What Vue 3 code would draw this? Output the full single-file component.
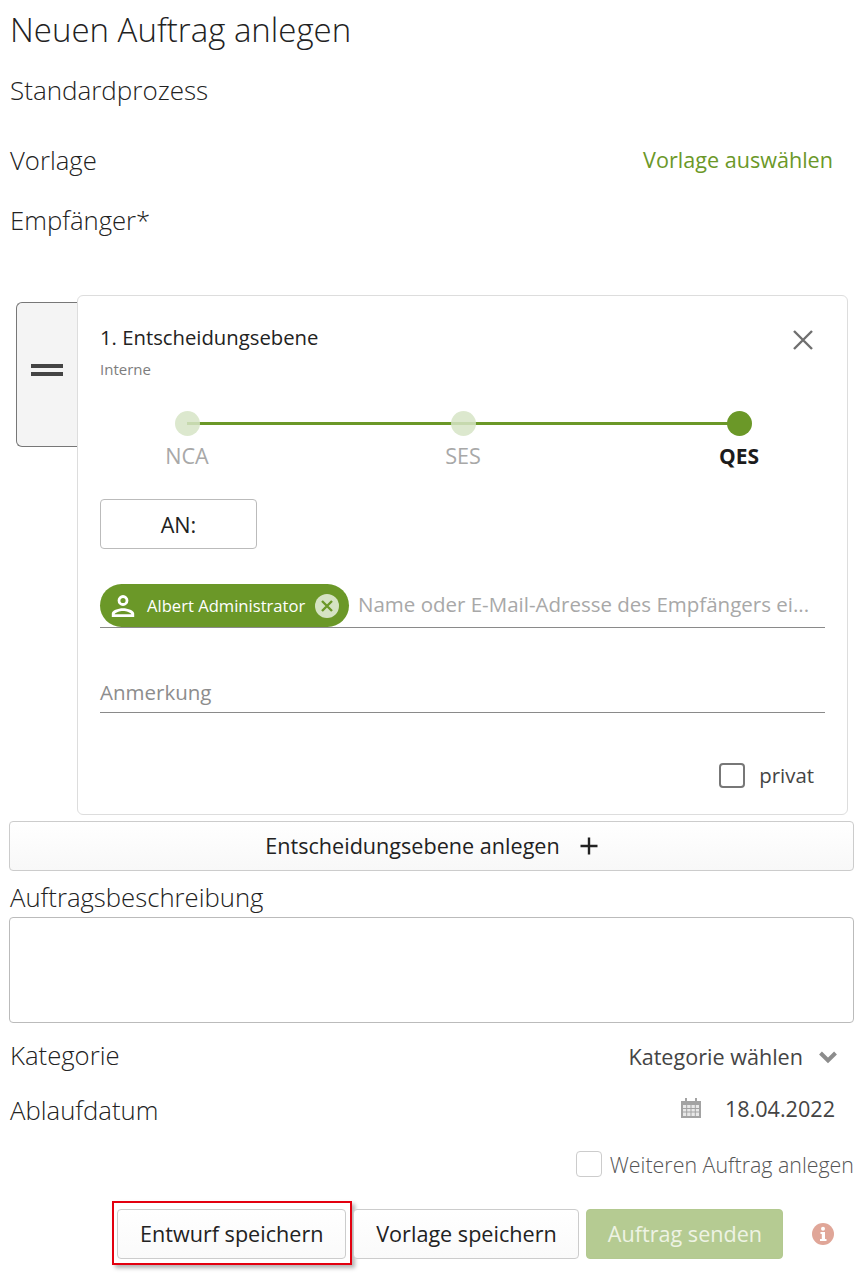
<template>
  <div class="page">
    <h1 class="title">Neuen Auftrag anlegen</h1>
    <div class="row process">Standardprozess</div>
    <div class="row template-row">
      <span>Vorlage</span>
      <a class="template-link">Vorlage auswählen</a>
    </div>
    <div class="row recipient-label">Empfänger*</div>

    <div class="level-wrap">
      <div class="handle">
        <span class="handle-bar"></span>
        <span class="handle-bar"></span>
      </div>
      <section class="level-card">
        <div class="level-head">
          <div class="level-title">1. Entscheidungsebene</div>
          <svg class="close" width="20" height="20" viewBox="0 0 20 20">
            <path d="M1 1 L19 19 M19 1 L1 19" stroke="#6f6f6f" stroke-width="2.4" fill="none" />
          </svg>
        </div>
        <div class="level-sub">Interne</div>

        <div class="stepper">
          <div class="step-line"></div>
          <div v-for="step in steps" :key="step.name" class="step" :class="{ active: step.active }">
            <span class="step-dot"></span>
            <span class="step-name">{{ step.name }}</span>
          </div>
        </div>

        <button class="to-btn">AN:</button>

        <div class="recipient-input">
          <div class="chip">
            <svg class="chip-user" width="24" height="24" viewBox="0 0 24 24">
              <circle cx="12" cy="6.5" r="4" fill="none" stroke="#fff" stroke-width="2.8" />
              <path d="M0.8 23 V19.5 C0.8 16.5 7 14.2 12 14.2 C17 14.2 23.2 16.5 23.2 19.5 V23 Z M3.6 20.2 H20.4 C19.4 18.4 15.5 17 12 17 C8.5 17 4.6 18.4 3.6 20.2 Z" fill="#fff" fill-rule="evenodd" />
            </svg>
            <span class="chip-name">Albert Administrator</span>
            <span class="chip-remove">
              <svg width="14" height="14" viewBox="0 0 14 14">
                <path d="M2 2 L12 12 M12 2 L2 12" stroke="#6b9828" stroke-width="2.4" fill="none" />
              </svg>
            </span>
          </div>
          <span class="placeholder recipient-placeholder">Name oder E-Mail-Adresse des Empfängers ei...</span>
        </div>

        <div class="note-input">
          <span class="placeholder">Anmerkung</span>
        </div>

        <label class="private">
          <span class="private-box"></span>
          <span>privat</span>
        </label>
      </section>
    </div>

    <button class="add-level">
      <span>Entscheidungsebene anlegen</span>
      <svg width="18" height="18" viewBox="0 0 18 18">
        <path d="M9 0.5 V17.5 M0.5 9 H17.5" stroke="#222" stroke-width="2.4" fill="none" />
      </svg>
    </button>

    <div class="row desc-label">Auftragsbeschreibung</div>
    <div class="desc-box"></div>

    <div class="row category-row">
      <span class="field-name">Kategorie</span>
      <span class="category-value">
        Kategorie wählen
        <svg class="chevron" width="20" height="14" viewBox="0 0 20 14">
          <path d="M2.5 3 L10 10.5 L17.5 3" stroke="#8c8c8c" stroke-width="4" fill="none" />
        </svg>
      </span>
    </div>

    <div class="row date-row">
      <span class="field-name">Ablaufdatum</span>
      <span class="date-value">
        <svg width="22" height="22" viewBox="0 0 22 22">
          <path d="M1 4 H21 V21 H1 Z" fill="#a3a3a3" />
          <path d="M5 1 H7 V6 H5 Z M15 1 H17 V6 H15 Z" fill="#a3a3a3" />
          <path d="M3 8 H19 V19 H3 Z" fill="#e8e8e8" />
          <path d="M3 11.5 H19 M3 15 H19 M6.7 8 V19 M11 8 V19 M15.3 8 V19" stroke="#a3a3a3" stroke-width="1" fill="none" />
        </svg>
        18.04.2022
      </span>
    </div>

    <label class="another">
      <span class="another-box"></span>
      <span>Weiteren Auftrag anlegen</span>
    </label>

    <div class="actions">
      <div class="highlight">
        <button class="btn">Entwurf speichern</button>
      </div>
      <button class="btn template-btn">Vorlage speichern</button>
      <button class="btn send">Auftrag senden</button>
      <svg class="info" width="22" height="22" viewBox="0 0 22 22">
        <circle cx="11" cy="11" r="11" fill="#e0a698" />
        <circle cx="11" cy="5.8" r="2" fill="#fff" />
        <path d="M8.5 9 H13 V16 H14.5 V18 H8 V16 H9.8 V11 H8.5 Z" fill="#fff" />
      </svg>
    </div>
  </div>
</template>

<script setup>
const steps = [
  { name: 'NCA', active: false },
  { name: 'SES', active: false },
  { name: 'QES', active: true }
];
</script>

<style scoped>
.page {
  box-sizing: border-box;
  width: 867px;
  height: 1276px;
  padding: 0 13px 0 9px;
  overflow: hidden;
  font-family: "Open Sans", sans-serif;
  color: #2b2b2b;
  background: #fff;
}

.title {
  height: 62px;
  margin: 0;
  padding-left: 1px;
  font-size: 33px;
  font-weight: 300;
  line-height: 60px;
  color: #222;
}

.row {
  display: flex;
  align-items: center;
  justify-content: space-between;
  box-sizing: border-box;
  padding-left: 1px;
  font-size: 25.7px;
  font-weight: 300;
  color: #222;
}

.process {
  height: 58px;
  padding-bottom: 2px;
  font-size: 26px;
}

.template-row {
  height: 60px;
  margin-top: 10px;
}

.template-link {
  padding: 0 21px 2px 0;
  font-size: 21.6px;
  font-weight: 400;
  color: #6b9828;
}

.recipient-label {
  height: 58px;
  padding-top: 2px;
}

.level-wrap {
  display: flex;
  align-items: flex-start;
  margin-top: 47px;
  padding-left: 7px;
}

.handle {
  box-sizing: border-box;
  display: flex;
  flex-direction: column;
  align-items: center;
  justify-content: center;
  gap: 4px;
  width: 61px;
  height: 145px;
  margin-top: 7px;
  padding-bottom: 9px;
  border: 1px solid #777;
  border-right: 0;
  border-radius: 6px 0 0 6px;
  background: #f4f4f4;
}

.handle-bar {
  width: 32px;
  height: 4px;
  background: #444;
}

.level-card {
  box-sizing: border-box;
  width: 771px;
  height: 520px;
  padding: 0 22px;
  border: 1px solid #ddd;
  border-radius: 6px;
  background: #fff;
}

.level-head {
  display: flex;
  align-items: center;
  justify-content: space-between;
  height: 42px;
  margin-top: 21px;
  padding-right: 12px;
}

.close {
  margin-top: 4px;
}

.level-title {
  padding-bottom: 2px;
  font-size: 20.3px;
  color: #222;
}

.level-sub {
  font-size: 15px;
  line-height: 20px;
  color: #7d7d7d;
}

.stepper {
  position: relative;
  display: flex;
  justify-content: space-between;
  margin-top: 32px;
  padding: 0 56px 0 57px;
}

.step-line {
  position: absolute;
  top: 11px;
  left: 87px;
  right: 86px;
  height: 3px;
  background: #6b9828;
}

.step {
  position: relative;
  display: flex;
  flex-direction: column;
  align-items: center;
  width: 60px;
}

.step-dot {
  width: 25px;
  height: 25px;
  border-radius: 50%;
  background: rgba(214, 228, 197, 0.85);
}

.step-name {
  margin-top: 6px;
  font-size: 21.6px;
  line-height: 28px;
  color: #a8a8a8;
}

.step.active .step-dot {
  background: #6b9828;
}

.step.active .step-name {
  font-size: 21px;
  font-weight: 700;
  color: #1c1c1c;
}

.to-btn {
  display: block;
  width: 157px;
  height: 50px;
  margin-top: 29px;
  padding: 0;
  border: 1px solid #bbb;
  border-radius: 4px;
  background: #fff;
  font: 400 21.6px "Open Sans", sans-serif;
  color: #222;
}

.recipient-input {
  display: flex;
  align-items: center;
  gap: 9px;
  height: 43px;
  margin-top: 35px;
  border-bottom: 1px solid #8a8a8a;
}

.chip {
  display: flex;
  flex: none;
  align-items: center;
  box-sizing: border-box;
  width: 249px;
  height: 43px;
  padding: 0 10px 0 11px;
  border-radius: 22px;
  background: #6b9828;
  color: #fff;
}

.chip-name {
  margin-left: 12px;
  font-size: 16.6px;
  white-space: nowrap;
}

.chip-remove {
  display: flex;
  align-items: center;
  justify-content: center;
  width: 24px;
  height: 24px;
  margin-left: auto;
  border-radius: 50%;
  background: #d5e3c3;
}

.placeholder {
  font-size: 20.5px;
  color: #a8a8a8;
}

.recipient-placeholder {
  padding-bottom: 3px;
  white-space: nowrap;
}

.note-input {
  display: flex;
  align-items: center;
  height: 40px;
  margin-top: 44px;
  border-bottom: 1px solid #8a8a8a;
}

.note-input .placeholder {
  color: #8d8d8d;
}

.private {
  display: flex;
  align-items: center;
  justify-content: flex-end;
  gap: 14px;
  height: 26px;
  margin: 49px 11px 0 0;
  font-size: 20.4px;
  color: #444;
}

.private-box {
  box-sizing: border-box;
  width: 26px;
  height: 25px;
  border: 2px solid #777;
  border-radius: 4px;
}

.add-level {
  display: flex;
  align-items: center;
  justify-content: center;
  gap: 20px;
  box-sizing: border-box;
  width: 845px;
  height: 50px;
  margin-top: 6px;
  padding-bottom: 3px;
  border: 1px solid #ccc;
  border-radius: 4px;
  background: linear-gradient(#fff, #f8f8f8);
  font: 400 21.6px "Open Sans", sans-serif;
  color: #222;
}

.add-level svg {
  margin-top: 2px;
}

.desc-label {
  height: 46px;
  padding-top: 6px;
}

.desc-box {
  box-sizing: border-box;
  width: 845px;
  height: 106px;
  border: 1px solid #bbb;
  border-radius: 4px;
}

.category-row {
  height: 64px;
}

.category-value {
  display: flex;
  align-items: center;
  gap: 15px;
  margin-top: 2px;
  padding-right: 16px;
  font-size: 21.6px;
  font-weight: 400;
  color: #444;
}

.chevron {
  margin-top: 2px;
}

.date-row {
  height: 44px;
  margin-top: 1px;
}

.date-value {
  display: flex;
  align-items: center;
  gap: 23px;
  padding: 0 19px 4px 0;
  font-size: 21.6px;
  font-weight: 400;
  color: #444;
}

.another {
  display: flex;
  align-items: center;
  justify-content: flex-end;
  gap: 8px;
  height: 36px;
  margin-top: 14px;
  font-size: 21.4px;
  font-weight: 300;
  color: #555;
}

.another-box {
  box-sizing: border-box;
  width: 26px;
  height: 26px;
  border: 1px solid #ccc;
  border-radius: 4px;
}

.actions {
  display: flex;
  align-items: center;
  gap: 7px;
  margin-top: 27px;
  padding-left: 108px;
}

.highlight {
  display: flex;
  margin: -8px -6px -6px -5px;
  padding: 6px 4px 4px 3px;
  border: 2px solid #e3000f;
  box-shadow: 3px 3px 4px rgba(0, 0, 0, 0.3);
}

.btn {
  box-sizing: border-box;
  height: 50px;
  padding: 0 22px 2px;
  border: 1px solid #ccc;
  border-radius: 4px;
  background: linear-gradient(#fff, #fafafa);
  font: 400 21.6px "Open Sans", sans-serif;
  color: #222;
  white-space: nowrap;
}

.template-btn {
  width: 226px;
  padding: 0 0 2px;
}

.send {
  width: 197px;
  padding: 0 0 2px;
  border-color: #b3c990;
  background: #b5cb92;
  color: #eef3e4;
}

.info {
  margin-left: 22px;
}
</style>

<style>
body {
  background: #fff;
}
</style>
